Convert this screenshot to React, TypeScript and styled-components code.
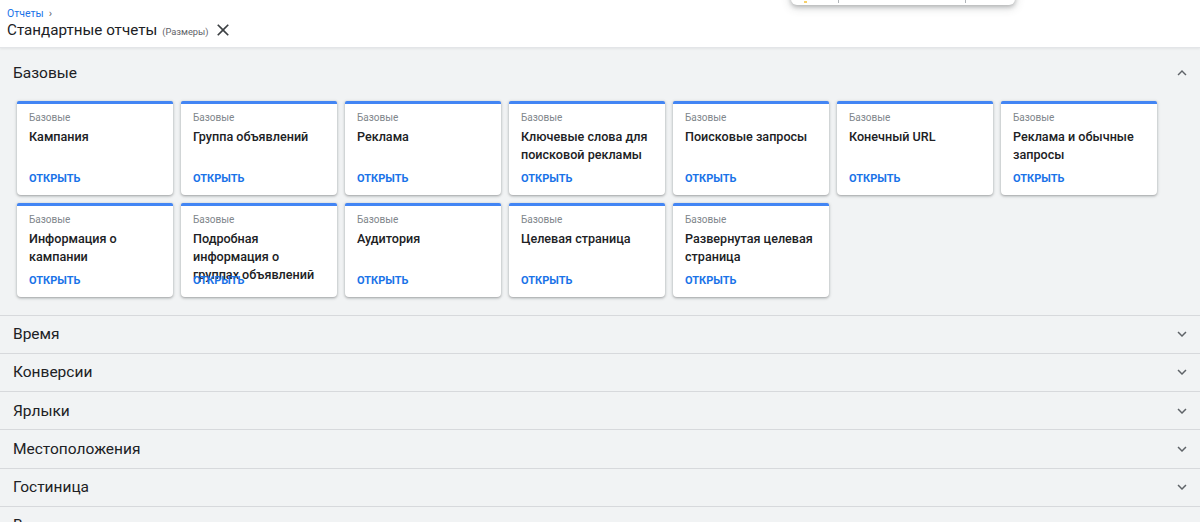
import React from "react";
import styled, { createGlobalStyle } from "styled-components";

const Global = createGlobalStyle`
  html, body { margin: 0; padding: 0; height: 100%; overflow: hidden; }
  body { font-family: Roboto, "Noto Sans", Arial, sans-serif; background: #f1f3f4; color: #202124; }
  * { box-sizing: border-box; }
`;

const Page = styled.div`
  position: relative;
  width: 1200px;
  height: 522px;
  overflow: hidden;
  background: #f1f3f4;
`;

const Header = styled.header`
  background: #fff;
  height: 48px;
  padding: 7px 7px 0;
  border-bottom: 1px solid #e3e5e8;
  box-shadow: 0 1px 2px rgba(60, 64, 67, 0.08);
`;

const Crumbs = styled.div`
  display: flex;
  align-items: center;
  gap: 5px;
  height: 14px;
  font-size: 10.5px;
  line-height: 14px;
`;

const CrumbLink = styled.span`
  color: #1a73e8;
`;

const CrumbSep = styled.span`
  color: #5f6368;
  font-size: 11px;
`;

const TitleRow = styled.div`
  display: flex;
  align-items: center;
  height: 18px;
`;

const Title = styled.h1`
  margin: 0;
  font-size: 15.2px;
  font-weight: 400;
  line-height: 18px;
  color: #202124;
`;

const Dim = styled.span`
  margin-left: 5px;
  font-size: 9.3px;
  color: #5f6368;
  line-height: 18px;
  padding-top: 3px;
`;

const CloseBtn = styled.span`
  display: inline-flex;
  margin-left: 4px;
  color: #3c4043;
`;

const Popup = styled.div`
  position: absolute;
  left: 791px;
  top: -30px;
  width: 224px;
  height: 35px;
  background: #fff;
  border-radius: 0 0 6px 6px;
  box-shadow: 0 2px 4px rgba(60, 64, 67, 0.3), 0 2px 8px 2px rgba(60, 64, 67, 0.15);
`;

const PopupMark = styled.span<{ $x: number; $c: string; $w: number; $h: number }>`
  position: absolute;
  left: ${(p) => p.$x}px;
  bottom: 2px;
  width: ${(p) => p.$w}px;
  height: ${(p) => p.$h}px;
  background: ${(p) => p.$c};
`;

const Section = styled.section`
  border-bottom: 1px solid #d7d9dc;
`;

const SectionHead = styled.div<{ $open?: boolean }>`
  display: flex;
  align-items: center;
  justify-content: space-between;
  height: ${(p) => (p.$open ? "51px" : "37.25px")};
  padding: ${(p) => (p.$open ? "0 9px 1px 13px" : "0 9px 0 13px")};
  font-size: 15.5px;
  color: #202124;
`;

const Chevron = styled.span`
  display: inline-flex;
  color: #5f6368;
`;

const Grid = styled.div`
  display: grid;
  grid-template-columns: repeat(7, 156px);
  gap: 8px;
  padding: 2px 0 17.5px 17px;
`;

const Card = styled.div`
  height: 94px;
  background: #fff;
  border-top: 3px solid #4285f4;
  border-radius: 2px 2px 4px 4px;
  box-shadow: 0 1px 2px rgba(60, 64, 67, 0.3), 0 1px 3px 1px rgba(60, 64, 67, 0.15);
  padding: 7px 12px 0;
  display: flex;
  flex-direction: column;
`;

const CardLabel = styled.div`
  font-size: 10px;
  line-height: 14px;
  color: #80868b;
`;

const CardTitle = styled.div`
  margin-top: 3px;
  height: 37px;
  font-size: 12.6px;
  font-weight: 500;
  line-height: 18px;
  color: #202124;
`;

const OpenLink = styled.div`
  margin-top: 6px;
  font-size: 11px;
  font-weight: 700;
  line-height: 16px;
  color: #1a73e8;
`;

const ChevronIcon = ({ up }: { up?: boolean }) => (
  <svg width="18" height="18" viewBox="0 0 24 24" fill="currentColor">
    {up ? (
      <path d="M12 8l-6 6 1.41 1.41L12 10.83l4.59 4.58L18 14z" />
    ) : (
      <path d="M16.59 8.59L12 13.17 7.41 8.59 6 10l6 6 6-6z" />
    )}
  </svg>
);

const CloseIcon = () => (
  <svg width="20" height="20" viewBox="0 0 24 24" fill="currentColor">
    <path d="M19 6.41L17.59 5 12 10.59 6.41 5 5 6.41 10.59 12 5 17.59 6.41 19 12 13.41 17.59 19 19 17.59 13.41 12z" />
  </svg>
);

const reports = [
  "Кампания",
  "Группа объявлений",
  "Реклама",
  "Ключевые слова для поисковой рекламы",
  "Поисковые запросы",
  "Конечный URL",
  "Реклама и обычные запросы",
  "Информация о кампании",
  "Подробная информация о группах объявлений",
  "Аудитория",
  "Целевая страница",
  "Развернутая целевая страница",
];

const collapsed = ["Время", "Конверсии", "Ярлыки", "Местоположения", "Гостиница", "Видео"];

export default function App() {
  return (
    <Page>
      <Global />
      <Header>
        <Crumbs>
          <CrumbLink>Отчеты</CrumbLink>
          <CrumbSep>›</CrumbSep>
        </Crumbs>
        <TitleRow>
          <Title>Стандартные отчеты</Title>
          <Dim>(Размеры)</Dim>
          <CloseBtn>
            <CloseIcon />
          </CloseBtn>
        </TitleRow>
      </Header>
      <Popup>
        <PopupMark $x={13} $c="#f6d06a" $w={3} $h={2} />
        <PopupMark $x={47} $c="#b0b4b8" $w={1} $h={3} />
        <PopupMark $x={174} $c="#b0b4b8" $w={1} $h={3} />
      </Popup>
      <Section>
        <SectionHead $open>
          <span>Базовые</span>
          <Chevron>
            <ChevronIcon up />
          </Chevron>
        </SectionHead>
        <Grid>
          {reports.map((r) => (
            <Card key={r}>
              <CardLabel>Базовые</CardLabel>
              <CardTitle>{r}</CardTitle>
              <OpenLink>ОТКРЫТЬ</OpenLink>
            </Card>
          ))}
        </Grid>
      </Section>
      {collapsed.map((c) => (
        <Section key={c}>
          <SectionHead>
            <span>{c}</span>
            <Chevron>
              <ChevronIcon />
            </Chevron>
          </SectionHead>
        </Section>
      ))}
    </Page>
  );
}
